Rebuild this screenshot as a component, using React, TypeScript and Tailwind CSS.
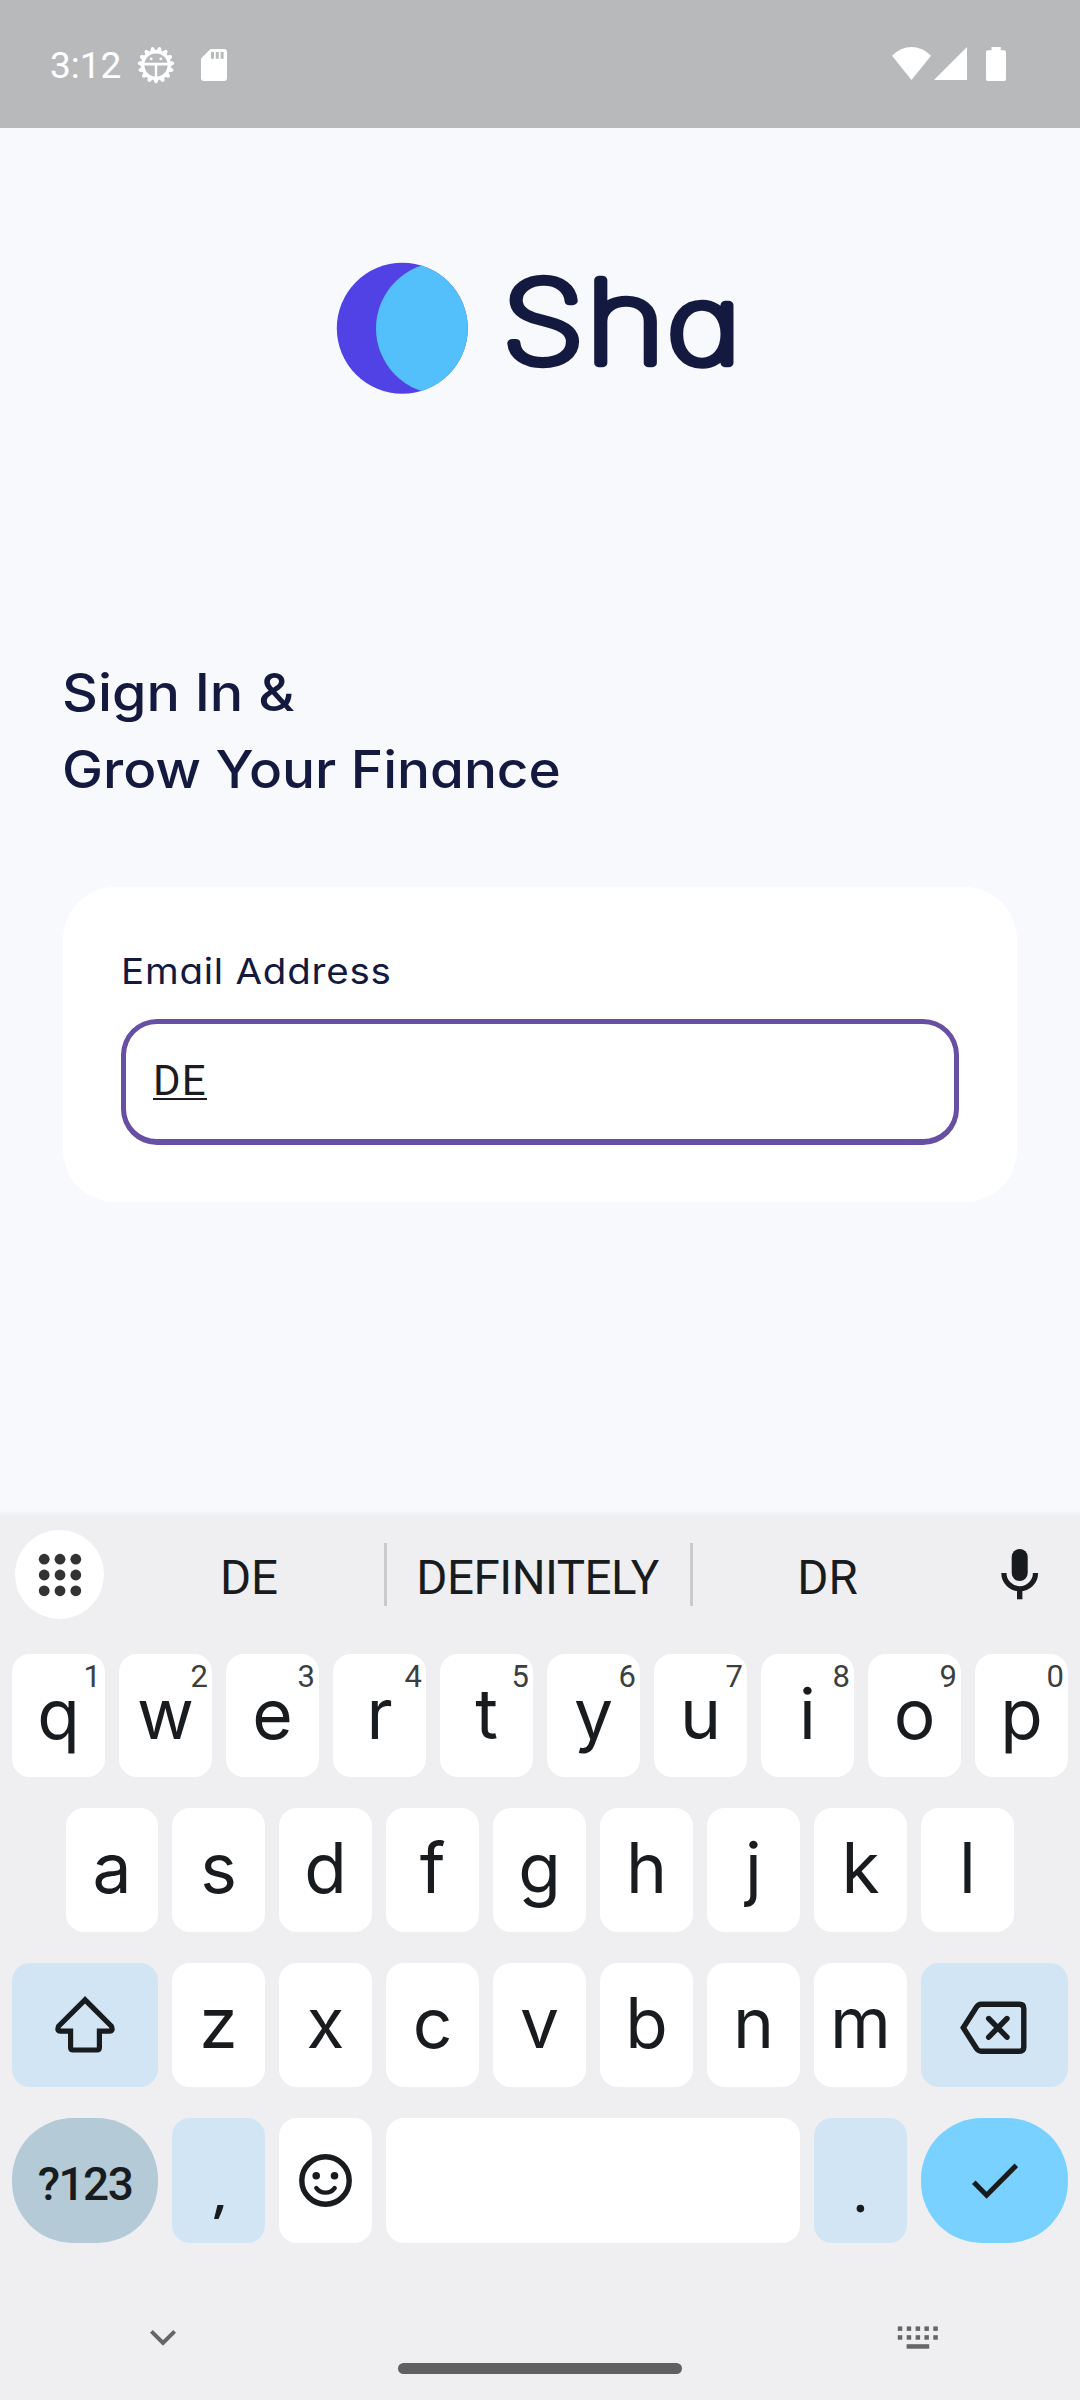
import React from "react";

const INK = "#191c1e";

function StatusBar() {
  return (
    <header className="flex h-32 shrink-0 items-start justify-between bg-[#b8b9bb] text-white">
      <div className="flex pl-[50px]">
        <span className="w-[87px] pt-[44px] font-[Roboto] text-[37px] leading-[44px]">3:12</span>
        <svg className="mt-[46px]" width="38" height="38" viewBox="0 0 38 38">
          {Array.from({ length: 15 }, (_, i) => (
            <path key={i} d="M15.8 5.5 L17.6 1.4 Q19 -0.2 20.4 1.4 L22.2 5.5 Z" fill="white" transform={`rotate(${i * 24 + 12} 19 19)`} />
          ))}
          <circle cx="19" cy="19" r="13.2" fill="none" stroke="white" strokeWidth="3.2" />
          <path d="M7 16.8 H31 V19.4 H7 Z M17.8 18 H20.2 V31 H17.8 Z" fill="white" />
          <circle cx="14.2" cy="12.8" r="1.4" fill="white" />
          <circle cx="23.8" cy="12.8" r="1.4" fill="white" />
        </svg>
        <svg className="mt-[49px] ml-[26px]" width="26" height="32" viewBox="0 0 26 32">
          <path d="M9.5 0 H23 Q26 0 26 3 V29 Q26 32 23 32 H3 Q0 32 0 29 V9.5 Z" fill="white" />
          <path d="M10 3 H13 V9.7 H10 Z M14.8 3 H17.8 V9.7 H14.8 Z M19.6 3 H22.6 V9.7 H19.6 Z" fill="#b8b9bb" />
        </svg>
      </div>
      <div className="flex pt-[47px] pr-[74px]">
        <svg width="39" height="33" viewBox="0 0 39 33">
          <path d="M0 8.8 Q8.5 0 19.5 0 Q30.5 0 39 8.8 L19.5 33 Z" fill="white" />
        </svg>
        <svg className="ml-[3px]" width="33" height="33" viewBox="0 0 33 33">
          <path d="M33 0 V33 H0 Z" fill="white" />
        </svg>
        <svg className="ml-[19px]" width="20" height="34" viewBox="0 0 20 34">
          <path d="M5.5 0 H14.8 V3.2 H18 Q20 3.2 20 5.2 V32 Q20 34 18 34 H2 Q0 34 0 32 V5.2 Q0 3.2 2 3.2 H5.5 Z" fill="white" />
        </svg>
      </div>
    </header>
  );
}

function Logo() {
  return (
    <div className="flex h-[267px] items-start pl-[336px] pt-[134px]">
      <svg width="133" height="133" viewBox="0 0 133 133">
        <defs>
          <clipPath id="moon">
            <circle cx="66.3" cy="66.3" r="65.5" />
          </clipPath>
        </defs>
        <circle cx="66.3" cy="66.3" r="65.5" fill="#5142e6" />
        <circle cx="106" cy="66.3" r="66" fill="#53c0fb" clipPath="url(#moon)" />
      </svg>
      <svg className="-mt-[30px] ml-[31px]" width="260" height="190" viewBox="0 -30 260 190">
        <text
          x="1.8 73 141.8"
          y="100.5"
          transform="scale(1.18 1)"
          fontFamily="Inter"
          fontWeight="100"
          fontSize="114"
          fill="#14193f"
          stroke="#14193f"
          strokeWidth="8.6"
          strokeLinejoin="round"
          style={{ fontFeatureSettings: '"cv11"' }}
        >
          Sh<tspan fontSize="107">a</tspan>
        </text>
      </svg>
    </div>
  );
}

function Key({ label, hint, first }: { label: string; hint?: string; first?: boolean }) {
  return (
    <div className={`relative h-full rounded-[18px] bg-white text-center ${first ? "w-[92px]" : "w-[93px]"}`}>
      <span className="block pt-[18px] text-[69.5px] leading-[84px]">{label}</span>
      {hint && (
        <span className="absolute top-[5px] right-[4px] font-[Roboto] text-[31px] leading-[36px] text-[#3c3f41]">{hint}</span>
      )}
    </div>
  );
}

function Keyboard() {
  return (
    <section className="flex h-[884px] flex-col bg-[#efeff1] font-[Inter] text-[#191c1e]">
      <div className="flex h-[138px] shrink-0 items-start">
        <div className="mt-[14px] ml-[15px] grid size-[89px] place-items-center rounded-full bg-white">
          <svg width="44" height="44" viewBox="-22 -22 44 44" fill="#333333">
            {[-15.8, 0, 15.8].map((y) => [-15.8, 0, 15.8].map((x) => <circle key={`${x},${y}`} cx={x} cy={y} r="5.4" />))}
          </svg>
        </div>
        <span className="mt-[34px] ml-[11px] w-[268px] text-center font-[Roboto] text-[47.5px] leading-[56px]">DE</span>
        <span className="mt-[27px] ml-[1px] h-[63px] w-[3px] bg-[#c9cacc]" />
        <span className="mt-[34px] w-[301px] text-center font-[Roboto] text-[47.5px] leading-[56px] tracking-[-0.5px]">DEFINITELY</span>
        <span className="mt-[27px] ml-[2px] h-[63px] w-[3px] bg-[#c9cacc]" />
        <span className="mt-[34px] w-[269px] text-center font-[Roboto] text-[47.5px] leading-[56px]">DR</span>
        <svg className="mt-[33px] ml-[38px]" width="39" height="51" viewBox="0 0 39 51">
          <rect x="11.7" y="0" width="16" height="32" rx="8" fill={INK} />
          <path d="M3.9 24 A15.8 15.8 0 0 0 35.5 24" fill="none" stroke={INK} strokeWidth="5.2" />
          <path d="M17 39 H22.4 V50.3 H17 Z" fill={INK} />
        </svg>
      </div>
      <div className="flex h-[123px] shrink-0 gap-[14px] pl-[12px]">
        {"qwertyuiop".split("").map((c, i) => (
          <Key key={c} label={c} hint={String((i + 1) % 10)} />
        ))}
      </div>
      <div className="mt-[31px] flex h-[124px] shrink-0 gap-[14px] pl-[66px]">
        {"asdfghjkl".split("").map((c, i) => (
          <Key key={c} label={c} first={i === 0} />
        ))}
      </div>
      <div className="mt-[31px] flex h-[124px] shrink-0 gap-[14px] pl-[12px]">
        <div className="w-[146px] rounded-[18px] bg-[#d2e5f4]">
          <svg width="146" height="124" viewBox="0 0 146 124" fill="none" stroke={INK} strokeWidth="5.2">
            <path d="M73 36.8 L46.6 63.2 Q44.6 68.1 48 68.1 H58.6 V84.5 Q58.6 87 61 87 H85 Q87.4 87 87.4 84.5 V68.1 H98 Q101.4 68.1 99.4 63.2 Z" />
          </svg>
        </div>
        {"zxcvbnm".split("").map((c) => (
          <Key key={c} label={c} />
        ))}
        <div className="w-[147px] rounded-[18px] bg-[#d2e5f4]">
          <svg width="147" height="124" viewBox="0 0 147 124" fill="none" stroke={INK} strokeWidth="5.4">
            <path d="M42.3 64.8 L55.5 44 Q57.5 41.2 60 41.2 H98.5 Q102.8 41.2 102.8 45.5 V84 Q102.8 88.2 98.5 88.2 H60 Q57.5 88.2 55.5 85.5 Z" />
            <path d="M67.7 55.5 L86 74.2 M86 55.5 L67.7 74.2" strokeLinecap="round" />
          </svg>
        </div>
      </div>
      <div className="mt-[31px] flex h-[125px] shrink-0 gap-[14px] pl-[12px]">
        <div className="w-[146px] rounded-[61px] bg-[#b4cad7] pt-[38px] text-center font-[Roboto] text-[46px] leading-[56px] font-medium tracking-[-1.6px]">?123</div>
        <div className="w-[93px] rounded-[18px] bg-[#d2e5f4]">
          <svg width="93" height="125" viewBox="0 0 93 125">
            <path d="M45.5 87 H51.5 Q51.5 90 46.5 101 H42 Z" fill={INK} />
          </svg>
        </div>
        <div className="w-[93px] rounded-[18px] bg-white">
          <svg width="93" height="125" viewBox="0 0 93 125" fill="none" stroke={INK}>
            <circle cx="46.5" cy="62.5" r="23.7" strokeWidth="5.4" />
            <circle cx="37.2" cy="57.7" r="3.8" fill={INK} stroke="none" />
            <circle cx="55.5" cy="57.7" r="3.8" fill={INK} stroke="none" />
            <path d="M37.3 70 Q40.5 74.6 46.5 74.6 Q52.5 74.6 55.7 70" strokeWidth="4.4" strokeLinecap="round" />
          </svg>
        </div>
        <div className="w-[414px] rounded-[18px] bg-white" />
        <div className="w-[93px] rounded-[18px] bg-[#d2e5f4]">
          <svg width="93" height="125" viewBox="0 0 93 125">
            <circle cx="46.4" cy="90.6" r="3.8" fill={INK} />
          </svg>
        </div>
        <div className="w-[147px] rounded-[61px] bg-[#78d1ff]">
          <svg width="147" height="125" viewBox="0 0 147 125" fill="none" stroke={INK} strokeWidth="5">
            <path d="M52.8 64.3 L65.6 77.2 L95.3 47.3" />
          </svg>
        </div>
      </div>
      <div className="flex h-[157px] shrink-0">
        <svg className="mt-[84px] ml-[149px]" width="28" height="20" viewBox="0 0 28 20" fill="none" stroke="#666666" strokeWidth="4">
          <path d="M2.4 4.3 L14 16 L25.6 4.3" />
        </svg>
        <div className="mt-[120px] ml-[221px] h-[11px] w-[284px] rounded-full bg-[#606060]" />
        <svg className="mt-[82px] ml-[215px]" width="42" height="26" viewBox="0 0 42 26" fill="#666666">
          {[0, 8.9, 17.8, 26.6, 35.5].map((x) => (
            <React.Fragment key={x}>
              <rect x={x + 0.8} y="1.4" width="4.5" height="4.5" />
              <rect x={x + 0.8} y="10.2" width="4.5" height="4.5" />
            </React.Fragment>
          ))}
          <rect x="9.6" y="19.2" width="22.6" height="4.5" />
        </svg>
      </div>
    </section>
  );
}

export default function App() {
  return (
    <div className="flex h-[2400px] w-[1080px] flex-col overflow-hidden bg-[#f7f9fc]">
      <StatusBar />
      <main className="h-[1388px] shrink-0 bg-linear-to-b from-[#f7f9fc] from-[99.6%] to-[#efeff1]">
        <Logo />
        <h1 className="mt-[259px] pl-[62px] font-[Inter] text-[51.5px] leading-[77px] font-[550] whitespace-pre text-[#14193f] [font-feature-settings:'cv11']">
          <span className="block w-fit origin-left scale-x-[1.08]">Sign In &amp;</span>
          <span className="block w-fit origin-left scale-x-[1.065]">Grow Your Finance</span>
        </h1>
        <div className="mt-[79px] ml-[63px] h-[315px] w-[954px] rounded-[52px] bg-white px-[58px] pt-[63px]">
          <label className="block h-[69px] w-fit origin-left scale-x-[1.085] font-[Inter] text-[35.5px] leading-[44px] font-[370] tracking-[0.7px] text-[#14193f] [font-feature-settings:'cv11']">
            Email Address
          </label>
          <div className="flex h-[126px] w-[838px] items-start rounded-[36px] border-[5px] border-b-6 border-[#6750a4] pt-[39px] pl-[27px]">
            <span className="border-b-2 border-[#1d1b20] font-[Roboto] text-[42px] leading-[35px] tracking-[1.3px] text-[#1d1b20]">DE</span>
          </div>
        </div>
      </main>
      <Keyboard />
    </div>
  );
}
